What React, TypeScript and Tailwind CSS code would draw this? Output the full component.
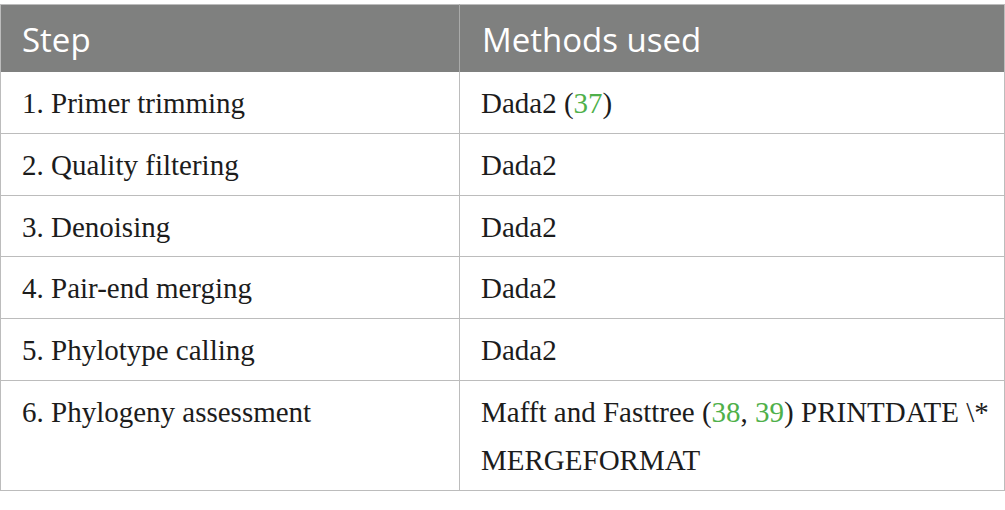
const rows: { step: string; method: React.ReactNode }[] = [
  {
    step: "1. Primer trimming",
    method: (
      <>
        Dada2 (<span className="text-[#4fb04a]">37</span>)
      </>
    ),
  },
  { step: "2. Quality filtering", method: "Dada2" },
  { step: "3. Denoising", method: "Dada2" },
  { step: "4. Pair-end merging", method: "Dada2" },
  { step: "5. Phylotype calling", method: "Dada2" },
  {
    step: "6. Phylogeny assessment",
    method: (
      <>
        <span className="whitespace-nowrap">
          Mafft and Fasttree (<span className="text-[#4fb04a]">38</span>,{" "}
          <span className="text-[#4fb04a]">39</span>) PRINTDATE \*
        </span>
        <br />
        MERGEFORMAT
      </>
    ),
  },
];

export default function App() {
  return (
    <div className="w-[1005px] h-[510px] bg-white pt-[4px]">
      <table className="w-[1005px] table-fixed border-collapse border border-[#bcbcbc]">
        <colgroup>
          <col className="w-[459px]" />
          <col />
        </colgroup>
        <thead>
          <tr className="bg-[#7f807f] text-white text-left font-['Open_Sans',sans-serif] text-[33px]">
            <th className="font-normal leading-[45px] pt-[12px] pb-[10px] pl-[21px] border-r border-[#a9aaa9]">
              Step
            </th>
            <th className="font-normal leading-[45px] pt-[12px] pb-[10px] pl-[22px]">
              Methods used
            </th>
          </tr>
        </thead>
        <tbody className="font-['Liberation_Serif',serif] text-[29px] text-[#1c1c1c]">
          {rows.map((r) => (
            <tr key={r.step} className="border-t border-[#bcbcbc] first:border-t-0 align-top">
              <td className="leading-[47.8px] pt-[8px] pb-[5px] pl-[21px] border-r border-[#bcbcbc]">
                {r.step}
              </td>
              <td className="leading-[47.8px] pt-[8px] pb-[5px] pl-[21px] pr-[10px]">
                {r.method}
              </td>
            </tr>
          ))}
        </tbody>
      </table>
    </div>
  );
}
